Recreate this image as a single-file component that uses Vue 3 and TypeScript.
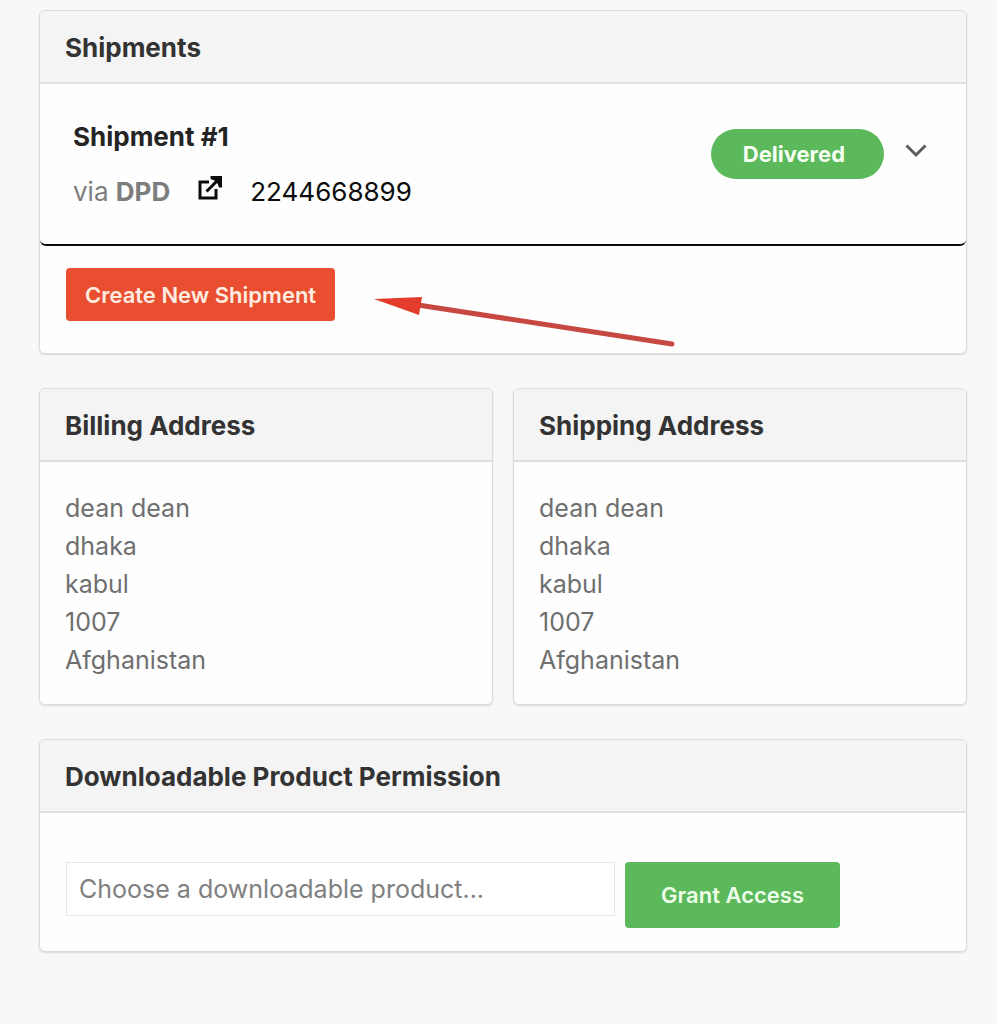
<script setup lang="ts">
import { ref } from 'vue'

interface Address {
  title: string
  lines: string[]
}

const addresses: Address[] = [
  { title: 'Billing Address', lines: ['dean dean', 'dhaka', 'kabul', '1007', 'Afghanistan'] },
  { title: 'Shipping Address', lines: ['dean dean', 'dhaka', 'kabul', '1007', 'Afghanistan'] },
]

const product = ref('')
</script>

<template>
  <main class="page">
    <section class="card">
      <h2 class="card-title">Shipments</h2>
      <article class="shipment">
        <div class="shipment-info">
          <h3 class="shipment-name">Shipment #1</h3>
          <p class="shipment-line">
            <span class="carrier">via <strong>DPD</strong></span>
            <a class="tracking" href="#">
              <svg class="external" viewBox="0 0 24 24" aria-hidden="true">
                <path d="M11 6H2V22H18V13" />
                <path d="M8.500 15.500L19 5" />
                <path class="tip" d="M12.500 0H24V11.500H21L19.500 7.500L16.500 4.500L12.500 3Z" />
              </svg>
              <span>2244668899</span>
            </a>
          </p>
        </div>
        <span class="badge">Delivered</span>
        <button class="toggle" type="button" aria-label="Toggle shipment details">
          <svg class="chevron" viewBox="0 0 22 14" aria-hidden="true">
            <path d="M1.500 1.500L11 11L20.500 1.500" />
          </svg>
        </button>
      </article>
      <div class="actions">
        <button class="create" type="button">Create New Shipment</button>
        <svg class="arrow" viewBox="0 0 302 50" aria-hidden="true">
          <path class="shaft" d="M44 7L298 46" />
          <path class="head" d="M0 1L48 -1L45 17Z" />
        </svg>
      </div>
    </section>

    <div class="columns">
      <section v-for="address in addresses" :key="address.title" class="card">
        <h2 class="card-title">{{ address.title }}</h2>
        <address class="address">
          <span v-for="line in address.lines" :key="line">{{ line }}</span>
        </address>
      </section>
    </div>

    <section class="card">
      <h2 class="card-title">Downloadable Product Permission</h2>
      <form class="grant-form" @submit.prevent>
        <input
          v-model="product"
          class="product"
          type="text"
          aria-label="Downloadable product"
          placeholder="Choose a downloadable product..."
        />
        <button class="grant" type="submit">Grant Access</button>
      </form>
    </section>
  </main>
</template>

<style>
body {
  margin: 0;
  background: #f8f8f8;
}
</style>

<style scoped>
.page {
  box-sizing: border-box;
  display: flex;
  flex-direction: column;
  gap: 34px;
  min-height: 100vh;
  padding: 10px 30px 68px 39px;
  background: #f8f8f8;
  color: #6f6f6f;
  font-family: Inter, "Liberation Sans", sans-serif;
  font-size: 26px;
  line-height: 38px;
}

h2,
h3,
p {
  margin: 0;
}

button,
input {
  box-sizing: border-box;
  margin: 0;
  font-family: inherit;
}

.card {
  border: 1px solid #dcdcdc;
  border-radius: 6px;
  background: #fefefe;
  box-shadow: 0 1px 2px #d8d8d8;
}

.card-title {
  padding: 18px 25px 15px;
  border-bottom: 2px solid #e0e0e0;
  border-radius: 5px 5px 0 0;
  background: #f4f4f4;
  color: #333333;
  font-size: 26px;
  font-weight: 700;
}

.shipment {
  display: flex;
  align-items: flex-start;
  padding: 34px 39px 33px 33px;
  border-bottom: 2px solid #0c0c0c;
  border-radius: 0 0 6px 6px;
}

.shipment-info {
  flex: 1;
}

.shipment-name {
  color: #242424;
  font-size: 26px;
  font-weight: 700;
}

.shipment-line {
  display: flex;
  align-items: center;
  gap: 28px;
  padding-top: 17px;
}

.carrier {
  color: #7d7d7d;
}

.carrier strong {
  font-weight: 700;
}

.tracking {
  display: flex;
  align-items: center;
  gap: 28px;
  color: #0c0c0c;
  text-decoration: none;
}

.external {
  width: 24px;
  height: 24px;
  margin-bottom: 8px;
  fill: none;
  stroke: #0c0c0c;
  stroke-width: 3;
}

.external .tip {
  fill: #0c0c0c;
  stroke: none;
}

.badge {
  margin-top: 11px;
  padding: 6px 39px 6px 32px;
  border-radius: 25px;
  background: #5bb85b;
  color: #f6fff2;
  font-size: 22px;
  font-weight: 700;
}

.toggle {
  display: flex;
  margin: 26px 0 0 21px;
  padding: 0;
  border: 0;
  background: none;
}

.chevron {
  width: 22px;
  height: 14px;
  fill: none;
  stroke: #5c5c5c;
  stroke-width: 3;
}

.actions {
  position: relative;
  padding: 22px 26px 32px;
}

.create {
  display: block;
  height: 53px;
  padding: 0 19px;
  border: 0;
  border-radius: 4px;
  background: #e84e2f;
  color: #ffece0;
  font-size: 22px;
  font-weight: 600;
}

.arrow {
  position: absolute;
  top: 52px;
  left: 334px;
  width: 302px;
  height: 50px;
  overflow: visible;
}

.shaft {
  fill: none;
  stroke: #c64840;
  stroke-linecap: round;
  stroke-width: 5;
}

.head {
  fill: #e33c2d;
}

.columns {
  display: grid;
  grid-template-columns: 1fr 1fr;
  gap: 20px;
}

.address {
  display: flex;
  flex-direction: column;
  padding: 27px 25px 25px;
  font-size: 25px;
  font-style: normal;
}

.grant-form {
  display: flex;
  align-items: flex-start;
  gap: 10px;
  padding: 49px 126px 23px 26px;
}

.product {
  flex: 1;
  min-width: 0;
  height: 54px;
  padding: 0 12px;
  border: 1px solid #e6e6e6;
  border-radius: 0;
  background: #ffffff;
  color: #444444;
  font-size: 25px;
}

.product::placeholder {
  color: #808080;
  opacity: 1;
}

.grant {
  height: 66px;
  padding: 0 36px;
  border: 0;
  border-radius: 4px;
  background: #5bb85b;
  color: #edffe8;
  font-size: 22px;
  font-weight: 600;
}
</style>
